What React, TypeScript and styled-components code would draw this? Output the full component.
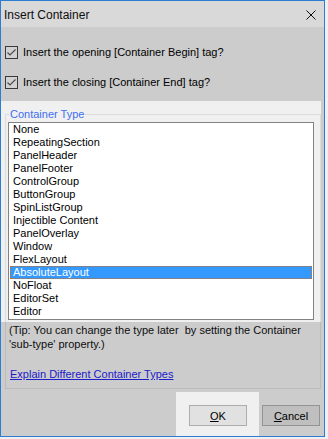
import React, { useState } from 'react';
import styled, { createGlobalStyle } from 'styled-components';

const GlobalStyle = createGlobalStyle`
    html, body {
        margin: 0;
        padding: 0;
        background: #f0f0f0;
    }
`;

const Window = styled.div`
    position: relative;
    width: 325px;
    height: 437px;
    box-sizing: border-box;
    border: 1px solid #2b7dd1;
    background: #f0f0f0;
    display: flex;
    flex-direction: column;
    font-family: "Liberation Sans", Arial, sans-serif;
    font-size: 11px;
    color: #000;
`;

const TitleBar = styled.div`
    height: 26px;
    flex: none;
    background: #fff;
    display: flex;
    align-items: center;
    justify-content: space-between;
    padding: 1px 8px 0 3px;
    box-sizing: border-box;
`;

const Title = styled.span`
    font-size: 12px;
    color: #111;
`;

const Body = styled.div`
    flex: 1;
    display: flex;
    flex-direction: column;
    padding: 18px 3px 0 4px;
`;

const CheckRow = styled.label<{ $first?: boolean }>`
    display: flex;
    align-items: center;
    gap: 5px;
    height: 14px;
    margin-top: ${({ $first }) => ($first ? '0' : '16px')};
`;

const Box = styled.span`
    width: 13px;
    height: 13px;
    box-sizing: border-box;
    border: 1px solid #444;
    background: #f6f6f6;
    display: flex;
    align-items: center;
    justify-content: center;
`;

const GroupBox = styled.fieldset`
    margin: 17px 0 0 0;
    padding: 0 6px 7px 2px;
    border: 1px solid #dcdcdc;
    min-width: 0;
`;

const Legend = styled.legend`
    margin-left: 1px;
    padding: 0 1px;
    line-height: 16px;
    color: #3f6ff0;
`;

const ListBox = styled.div`
    border: 1px solid #828282;
    background: #fff;
    padding: 0 0 1px 0;
`;

const Item = styled.div<{ $selected?: boolean }>`
    height: 13px;
    line-height: 13px;
    margin: 0 1px;
    padding-left: 2px;
    box-sizing: border-box;
    white-space: nowrap;
    background: ${({ $selected }) => ($selected ? '#3399ff' : 'transparent')};
    color: ${({ $selected }) => ($selected ? '#fff' : '#000')};
    border: 1px ${({ $selected }) => ($selected ? 'dotted #cc6a1e' : 'solid transparent')};
    display: flex;
    align-items: center;
`;

const Tip = styled.div`
    margin-top: 3px;
    padding-left: 1px;
    line-height: 14px;
    color: #111;
`;

const Link = styled.a`
    display: block;
    margin-top: 16px;
    padding-left: 2px;
    line-height: 14px;
    color: #2424ee;
    text-decoration: underline;
`;

const ButtonRow = styled.div`
    display: flex;
    justify-content: flex-end;
    gap: 15px;
    margin-top: 16px;
    padding-right: 1px;
`;

const Button = styled.button`
    width: 58px;
    height: 21px;
    box-sizing: border-box;
    border: 1px solid #adadad;
    background: #e1e1e1;
    font-family: inherit;
    font-size: 11px;
    color: #000;
    padding: 0;
`;

const Dim = styled.svg`
    position: absolute;
    left: 0;
    top: 0;
    pointer-events: none;
`;

const types = [
    'None',
    'RepeatingSection',
    'PanelHeader',
    'PanelFooter',
    'ControlGroup',
    'ButtonGroup',
    'SpinListGroup',
    'Injectible Content',
    'PanelOverlay',
    'Window',
    'FlexLayout',
    'AbsoluteLayout',
    'NoFloat',
    'EditorSet',
    'Editor',
];

const Check = () => (
    <svg width="11" height="11" viewBox="0 0 11 11">
        <path d="M1.5 5.5 L4 8 L9.5 2.5" fill="none" stroke="#5a5a5a" strokeWidth="1.2" />
    </svg>
);

const App: React.FC = () => {
    const [selected, setSelected] = useState('AbsoluteLayout');

    return (
        <>
            <GlobalStyle />
            <Window>
                <TitleBar>
                    <Title>Insert Container</Title>
                    <svg width="10" height="10" viewBox="0 0 10 10">
                        <path d="M0.5 0.5 L9.5 9.5 M9.5 0.5 L0.5 9.5" stroke="#111" strokeWidth="1" />
                    </svg>
                </TitleBar>
                <Body>
                    <CheckRow $first>
                        <Box><Check /></Box>
                        Insert the opening [Container Begin] tag?
                    </CheckRow>
                    <CheckRow>
                        <Box><Check /></Box>
                        Insert the closing [Container End] tag?
                    </CheckRow>
                    <GroupBox>
                        <Legend>Container Type</Legend>
                        <ListBox>
                            {types.map(t => (
                                <Item key={t} $selected={t === selected} onClick={() => setSelected(t)}>
                                    {t}
                                </Item>
                            ))}
                        </ListBox>
                        <Tip>
                            (Tip: You can change the type later&nbsp; by setting the Container
                            <br />
                            'sub-type' property.)
                        </Tip>
                        <Link href="#">Explain Different Container Types</Link>
                    </GroupBox>
                    <ButtonRow>
                        <Button><u>O</u>K</Button>
                        <Button><u>C</u>ancel</Button>
                    </ButtonRow>
                </Body>
                <Dim width="323" height="435">
                    <path
                        fillRule="evenodd"
                        fill="rgba(0,0,0,0.15)"
                        d="M0 0 H323 V435 H0 Z M0 100 H320 V321 H0 Z M175 391 H258 V435 H175 Z"
                    />
                </Dim>
            </Window>
        </>
    );
};

export default App;
